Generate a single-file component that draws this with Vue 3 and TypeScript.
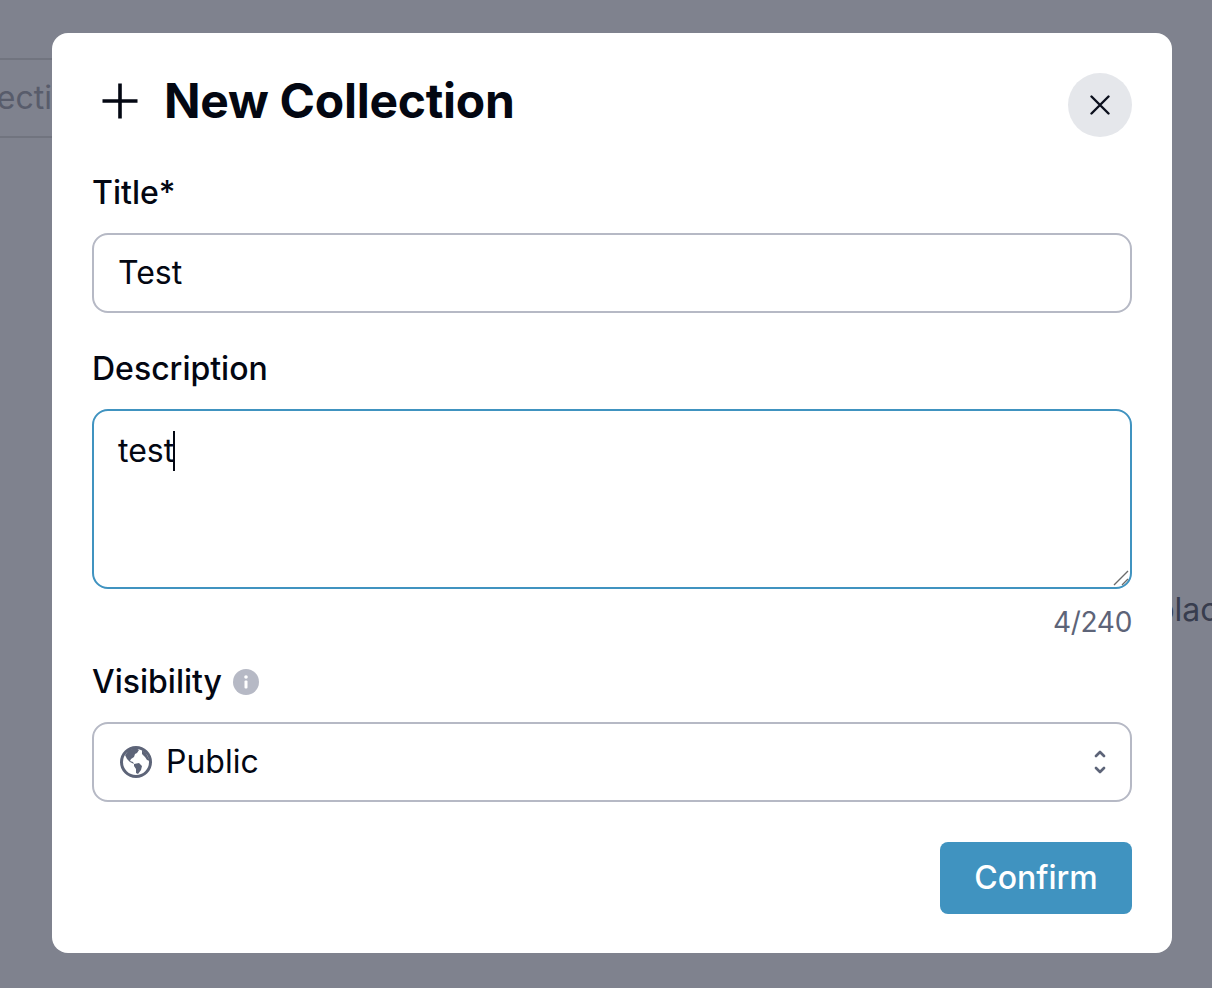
<script setup lang="ts">
const maxLen = 240
const description = 'test'
</script>

<template>
  <div class="page">
    <div class="backdrop-content">
      <div class="tab-row"><span class="tab">Collection</span></div>
      <p class="bg-text">placeholder</p>
    </div>
    <div class="overlay">
      <section class="modal">
        <header class="head">
          <h2 class="title">
            <svg class="plus" viewBox="0 0 36 36" fill="none" stroke="#030712" stroke-width="3.6">
              <path d="M18 0.5V35.5M0.5 18H35.5" />
            </svg>
            New Collection
          </h2>
          <button class="close" type="button" aria-label="Close">
            <svg viewBox="0 0 20 20" fill="none" stroke="#0b0f1c" stroke-width="2.4" stroke-linecap="round">
              <path d="M1.5 1.5L18.5 18.5M18.5 1.5L1.5 18.5" />
            </svg>
          </button>
        </header>

        <div class="label title-label">Title*</div>
        <div class="field title-field">Test</div>

        <div class="label desc-label">Description</div>
        <div class="field area">
          <span class="typed">{{ description }}<i class="caret"></i></span>
          <svg class="grip" viewBox="0 0 16 16" fill="none" stroke="#6b6b6b" stroke-width="1.4">
            <path d="M1 15L15 1M9 15L15 9" />
          </svg>
        </div>
        <div class="count">{{ description.length }}/{{ maxLen }}</div>

        <div class="label vis-label">
          Visibility
          <svg class="info" viewBox="0 0 26 26">
            <circle cx="13" cy="13" r="13" fill="#b6b9c5" />
            <rect x="11.5" y="11.5" width="3" height="8" rx="1" fill="#fff" />
            <circle cx="13" cy="8" r="1.8" fill="#fff" />
          </svg>
        </div>
        <div class="field select">
          <svg class="globe" viewBox="0 0 32 32">
            <circle cx="16" cy="16" r="14.5" fill="#fff" stroke="#5d6478" stroke-width="3" />
            <path fill="#5d6478" d="M5 9l4-5 7-2 3 2-2 3-2 1-1 3-3 2-1 2 3 1 1 2-4-2-3-3zM14 18l5-1 3 3-1 4-3 4-2-1 0-4-2-3zM22 4l4 3 4 8-3-1-2-3-3-3z" />
          </svg>
          <span>Public</span>
          <svg class="chev" viewBox="0 0 14 28" fill="none" stroke="#5d6478" stroke-width="2.6" stroke-linecap="round" stroke-linejoin="round">
            <path d="M3 8L7 4L11 8M3 20L7 24L11 20" />
          </svg>
        </div>

        <footer class="foot">
          <button class="confirm" type="button">Confirm</button>
        </footer>
      </section>
    </div>
  </div>
</template>

<style>
html, body { margin: 0; background: #7f828e; }
</style>

<style scoped>
.page {
  position: relative;
  height: 988px;
  overflow: hidden;
  background: #7f828e;
  font-family: Inter, "Liberation Sans", sans-serif;
  color: #030712;
}
.backdrop-content {
  height: 100%;
  display: flex;
  flex-direction: column;
}
.tab-row {
  margin-top: 58px;
  box-sizing: border-box;
  height: 80px;
  width: 60px;
  border-top: 2px solid #71747f;
  border-bottom: 2px solid #71747f;
  display: flex;
  align-items: center;
  justify-content: flex-end;
}
.tab {
  color: #585c6b;
  font-size: 32px;
  line-height: 78px;
  white-space: nowrap;
  flex: none;
  margin-right: -30px;
}
.bg-text {
  margin: 452px 0 0 1155px;
  font-size: 32px;
  line-height: 40px;
  color: #383d4e;
  white-space: nowrap;
}
.overlay {
  position: absolute;
  inset: 0;
}
.modal {
  position: absolute;
  left: 52px;
  top: 33px;
  width: 1120px;
  height: 920px;
  box-sizing: border-box;
  padding: 40px;
  background: #fff;
  border-radius: 16px;
  display: flex;
  flex-direction: column;
}
.modal > * { flex: none; }
.head {
  display: flex;
  justify-content: space-between;
  align-items: flex-start;
  height: 64px;
}
.title {
  margin: -4px 0 0 10px;
  display: flex;
  align-items: center;
  gap: 26px;
  font-size: 48px;
  line-height: 64px;
  font-weight: 700;
  letter-spacing: -0.28px;
}
.plus { width: 36px; height: 36px; flex: none; }
.close {
  width: 64px;
  height: 64px;
  border: 0;
  padding: 0;
  border-radius: 50%;
  background: #e5e7eb;
  display: flex;
  align-items: center;
  justify-content: center;
}
.close svg { width: 20px; height: 20px; }
.label {
  font-size: 32px;
  line-height: 40px;
  font-weight: 500;
}
.title-label { margin-top: 36px; }
.desc-label { margin-top: 36px; }
.vis-label {
  margin-top: 20px;
  display: flex;
  align-items: center;
  gap: 11px;
}
.info { width: 26px; height: 26px; }
.field {
  height: 80px;
  box-sizing: border-box;
  border: 2px solid #b6b9c5;
  border-radius: 16px;
  padding: 0 24px;
  display: flex;
  align-items: center;
  font-size: 32px;
  line-height: 40px;
  background: #fff;
}
.title-field { margin-top: 20px; }
.area {
  position: relative;
  height: 180px;
  margin-top: 20px;
  border-color: #4093c0;
  align-items: flex-start;
  padding-top: 20px;
}
.typed { position: relative; }
.caret {
  position: absolute;
  right: -1px;
  top: 0;
  width: 2px;
  height: 40px;
  background: #030712;
}
.grip {
  position: absolute;
  right: 1px;
  bottom: 1px;
  width: 16px;
  height: 16px;
}
.count {
  margin-top: 13px;
  text-align: right;
  font-size: 28px;
  line-height: 40px;
  color: #5d6478;
  letter-spacing: -0.3px;
}
.select { gap: 14px; margin-top: 20px; padding: 0 26px; }
.globe { width: 32px; height: 32px; flex: none; }
.chev { width: 14px; height: 28px; margin-left: auto; margin-right: -3px; }
.foot {
  margin-top: 40px;
  display: flex;
  justify-content: flex-end;
}
.confirm {
  width: 192px;
  height: 72px;
  border: 0;
  border-radius: 8px;
  background: #4093c0;
  color: #fff;
  font-family: inherit;
  font-size: 32px;
  font-weight: 500;
  padding: 0 0 2px;
}
</style>
